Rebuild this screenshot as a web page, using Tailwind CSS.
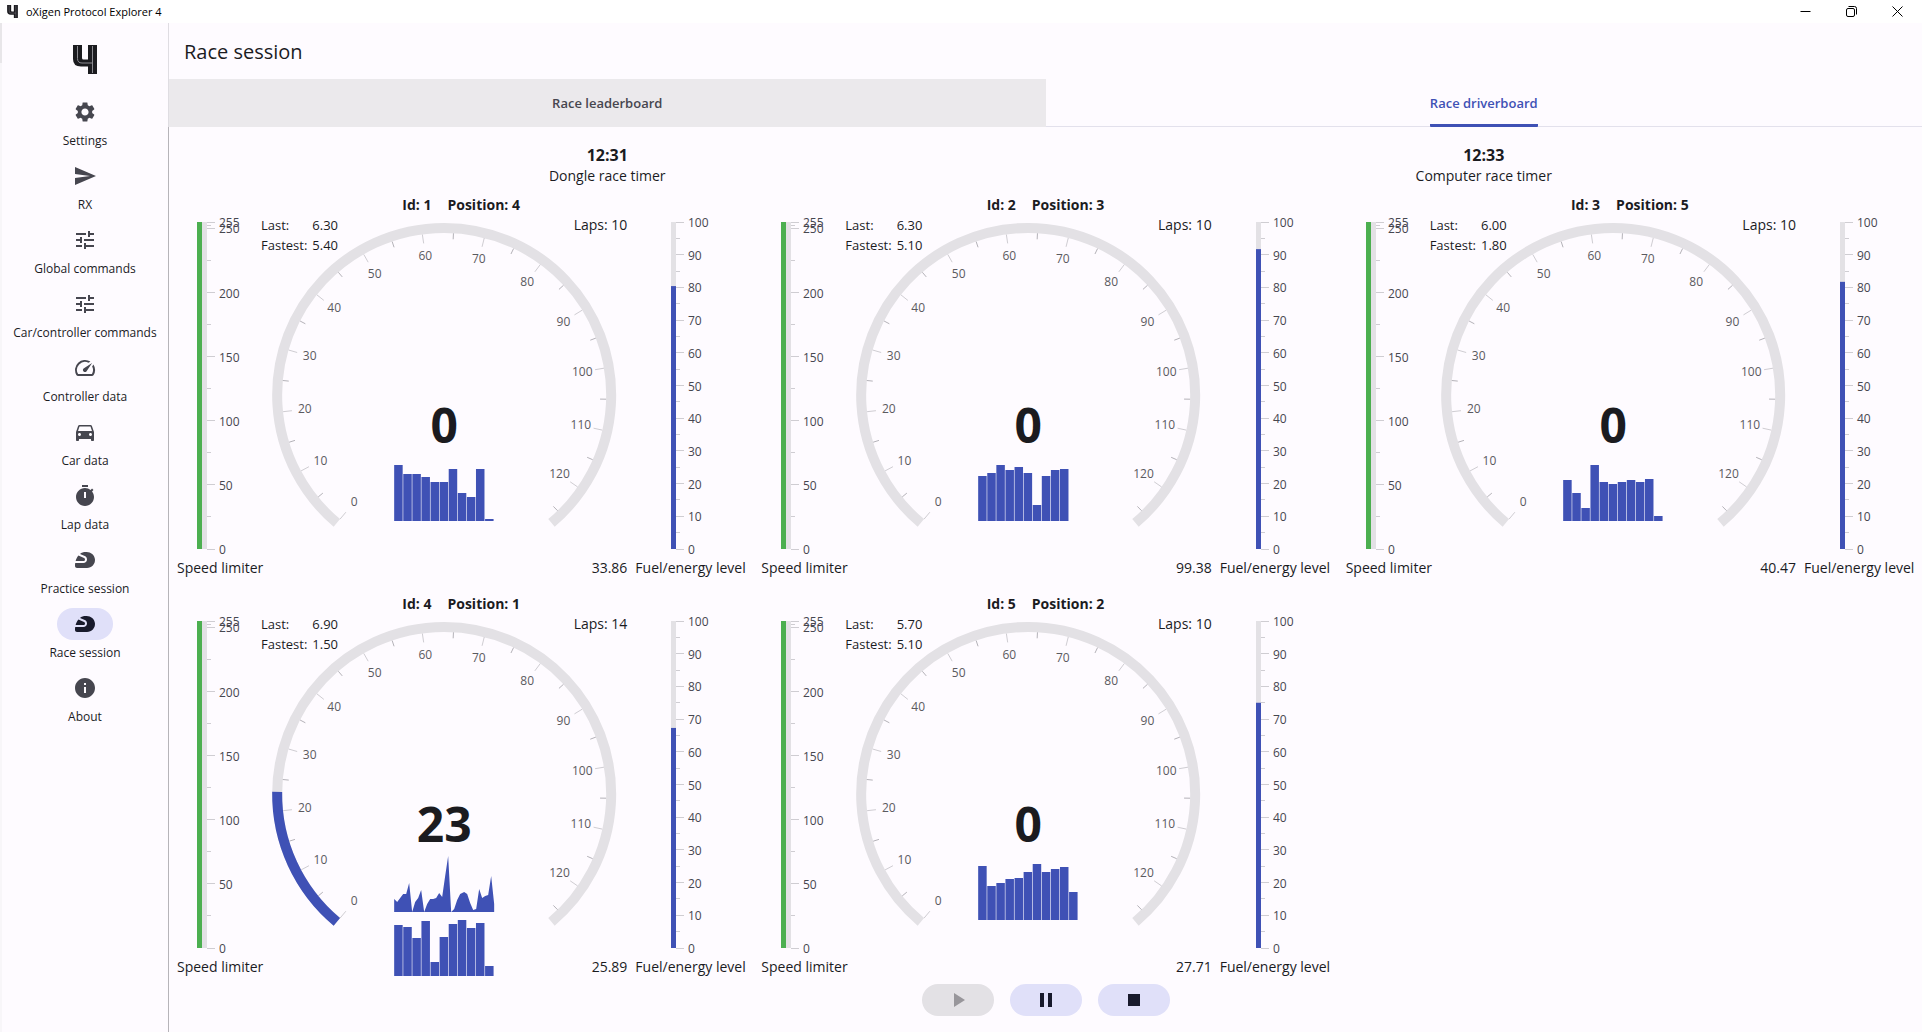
<!DOCTYPE html>
<html lang="en">
<head>
<meta charset="utf-8">
<meta name="viewport" content="width=device-width, initial-scale=1">
<title>oXigen Protocol Explorer 4</title>
<script src="https://cdn.jsdelivr.net/npm/@tailwindcss/browser@4"></script>
</head>
<body class="min-h-screen flex flex-col bg-[#fefbff] text-[#1b1b1f] font-['Open_Sans','Noto_Sans',sans-serif] text-[14px] leading-5">

<svg class="hidden" aria-hidden="true">
  <symbol id="logo" viewBox="0 0 24 29">
    <path fill="#1b1b1f" d="M0 0h9v13q0 1.500 1.500 1.500H15V0h9v29h-9v-7.500H8Q0 21.500 0 14z"/>
    <path fill="none" stroke="#8b8a90" stroke-width="1" d="M4.500 1v12.500q0 4.500 4.500 4.500h10.500M19.500 1v27"/>
  </symbol>
  <symbol id="settings" viewBox="0 0 24 24"><path d="M19.140 12.940c.04-.3.06-.61.06-.94 0-.32-.02-.64-.07-.94l2.030-1.580c.18-.14.23-.41.12-.61l-1.920-3.320c-.12-.22-.37-.29-.59-.22l-2.390.96c-.5-.38-1.030-.7-1.620-.94L14.400 2.810c-.04-.24-.24-.41-.48-.41h-3.840c-.24 0-.43.17-.47.41L9.250 5.350c-.59.24-1.130.57-1.620.94l-2.390-.96c-.22-.08-.47 0-.59.22L2.740 8.870c-.12.21-.08.47.12.61l2.030 1.580c-.05.3-.09.63-.09.94s.02.64.07.94l-2.030 1.580c-.18.14-.23.41-.12.61l1.920 3.320c.12.22.37.29.59.22l2.390-.96c.5.38 1.030.7 1.620.94l.36 2.540c.05.24.24.41.48.41h3.840c.24 0 .44-.17.47-.41l.36-2.540c.59-.24 1.130-.56 1.620-.94l2.390.96c.22.08.47 0 .59-.22l1.920-3.320c.12-.22.07-.47-.12-.61l-2.010-1.580zM12 15.600c-1.980 0-3.600-1.620-3.600-3.600s1.620-3.600 3.600-3.600 3.600 1.620 3.600 3.600-1.620 3.600-3.600 3.600z"/></symbol>
  <symbol id="send" viewBox="0 0 24 24"><path d="M2.010 21L23 12 2.010 3 2 10l15 2-15 2z"/></symbol>
  <symbol id="tune" viewBox="0 0 24 24"><path d="M3 17v2h6v-2H3zM3 5v2h10V5H3zm10 16v-2h8v-2h-8v-2h-2v6h2zM7 9v2H3v2h4v2h2V9H7zm14 4v-2H11v2h10zm-6-4h2V7h4V5h-4V3h-2v6z"/></symbol>
  <symbol id="speed" viewBox="0 0 24 24"><path d="M20.380 8.570l-1.230 1.850a8 8 0 0 1-.22 7.580H5.070A8 8 0 0 1 15.580 6.850l1.850-1.230A10 10 0 0 0 3.350 19a2 2 0 0 0 1.720 1h13.850a2 2 0 0 0 1.740-1 10 10 0 0 0-.27-10.440zM10.590 15.410a2 2 0 0 0 2.830 0l5.660-8.490-8.490 5.660a2 2 0 0 0 0 2.830z"/></symbol>
  <symbol id="car" viewBox="0 0 24 24"><path d="M18.920 6.010C18.720 5.420 18.160 5 17.500 5h-11c-.66 0-1.210.42-1.420 1.010L3 12v8c0 .55.45 1 1 1h1c.55 0 1-.45 1-1v-1h12v1c0 .55.45 1 1 1h1c.55 0 1-.45 1-1v-8l-2.080-5.990zM6.500 16c-.83 0-1.500-.67-1.500-1.500S5.670 13 6.500 13s1.500.67 1.500 1.500S7.330 16 6.500 16zm11 0c-.83 0-1.500-.67-1.500-1.500s.67-1.500 1.500-1.500 1.500.67 1.500 1.500-.67 1.500-1.500 1.500zM5 11l1.500-4.500h11L19 11H5z"/></symbol>
  <symbol id="timer" viewBox="0 0 24 24"><path d="M9 1h6v2H9zM19.030 7.390l1.420-1.420c-.43-.51-.9-.99-1.410-1.410l-1.420 1.420C16.070 4.740 14.120 4 12 4c-4.970 0-9 4.030-9 9s4.020 9 9 9 9-4.030 9-9c0-2.120-.74-4.070-1.970-5.610zM13 14h-2V8h2v6z"/></symbol>
  <symbol id="helmet" viewBox="0 0 24 24"><path d="M12 11.390c0-.65-.39-1.230-.98-1.480L5.440 7.550c-1.480 1.680-2.320 3.700-2.800 5.450h7.750c.89 0 1.610-.72 1.610-1.610zM21.960 11.220C21.550 7.050 17.820 4 13.630 4H12S9.330 4 7.020 5.880l4.770 2.030c1.330.57 2.200 1.870 2.200 3.320v.16c0 1.990-1.620 3.610-3.610 3.610H2.210C2 16.310 2 17.200 2 17.200v.8c0 1.100.9 2 2 2h10c4.670 0 8.410-4.010 7.960-8.780z"/></symbol>
  <symbol id="info" viewBox="0 0 24 24"><path d="M12 2C6.480 2 2 6.480 2 12s4.480 10 10 10 10-4.480 10-10S17.520 2 12 2zm1 15h-2v-6h2v6zm0-8h-2V7h2v2z"/></symbol>
</svg>

<header class="h-[23px] shrink-0 bg-white flex items-center pl-[7px] pr-0.5 text-black">
  <svg class="w-[11px] h-[13px]" aria-hidden="true"><use href="#logo"/></svg>
  <span class="ml-2 text-[11px] leading-4">oXigen Protocol Explorer 4</span>
  <div class="ml-auto flex h-full">
    <button class="w-[46px] flex items-center justify-center" aria-label="Minimize"><svg class="size-[11px]" viewBox="0 0 11 11" stroke="black" fill="none"><path d="M.5 5.500h10"/></svg></button>
    <button class="w-[46px] flex items-center justify-center" aria-label="Restore"><svg class="size-[11px]" viewBox="0 0 11 11" stroke="black" fill="none"><rect x=".5" y="2.500" width="8" height="8" rx="1.500"/><path d="M2.500 .5h6q2 0 2 2v6"/></svg></button>
    <button class="w-[46px] flex items-center justify-center" aria-label="Close"><svg class="size-[11px]" viewBox="0 0 11 11" stroke="black" fill="none"><path d="M.5 .5l10 10M10.500 .5l-10 10"/></svg></button>
  </div>
</header>

<div class="flex flex-1">
  <div class="w-0.5 shrink-0 bg-[#f8f6f9]"><div class="h-10 bg-[#e8e6e9]"></div></div>
  <aside class="w-[166px] shrink-0 flex flex-col items-center pt-[22px]">
    <svg class="w-6 h-[29px] mb-[22px]" role="img" aria-label="oXigen 4"><use href="#logo"/></svg>
    <nav id="nav" class="w-full flex flex-col gap-[11px]"></nav>
  </aside>

  <main class="flex-1 min-w-0 flex flex-col">
    <div class="border-l border-[#dfdde2]">
      <h1 class="h-14 pl-[15px] pt-0.5 flex items-center text-[20px] leading-7">Race session</h1>
      <div class="h-12 grid grid-cols-2 border-b border-[#e3e1ec] text-[13px] font-semibold" role="tablist">
        <button class="bg-[#ebe9ec] text-[#46464f] flex items-center justify-center" role="tab" aria-selected="false">Race leaderboard</button>
        <button class="text-[#3f51b5] flex justify-center" role="tab" aria-selected="true"><span class="h-12 flex items-center border-b-3 border-[#3f51b5] rounded-b-[1px] pt-[3px]">Race driverboard</span></button>
      </div>
    </div>

    <div class="flex-1 border-l border-[#b6b4b9] flex flex-col pb-4">
      <div class="grid grid-cols-2 text-center pt-[18px] pb-[7px]">
        <div><p class="text-[16px] font-bold leading-5">12:31</p><p class="leading-[22px]">Dongle race timer</p></div>
        <div><p class="text-[16px] font-bold leading-5">12:33</p><p class="leading-[22px]">Computer race timer</p></div>
      </div>
      <div id="board" class="grid grid-cols-3 gap-y-4"></div>
      <div class="mt-2 flex justify-center gap-4">
        <button class="w-[72px] h-8 rounded-full bg-[#e3e1e5] flex items-center justify-center" aria-label="Start" disabled><svg class="size-6" viewBox="0 0 24 24" fill="#98969b"><path d="M8 5v14l11-7z"/></svg></button>
        <button class="w-[72px] h-8 rounded-full bg-[#e0e0f9] flex items-center justify-center" aria-label="Pause"><svg class="size-6" viewBox="0 0 24 24" fill="#181a2c"><path d="M6 19h4V5H6v14zm8-14v14h4V5h-4z"/></svg></button>
        <button class="w-[72px] h-8 rounded-full bg-[#e0e0f9] flex items-center justify-center" aria-label="Stop"><svg class="size-6" viewBox="0 0 24 24" fill="#181a2c"><path d="M6 6h12v12H6z"/></svg></button>
      </div>
    </div>
  </main>
</div>

<script>
const navItems = [
  ['settings', 'Settings'], ['send', 'RX'], ['tune', 'Global commands'], ['tune', 'Car/controller commands'],
  ['speed', 'Controller data'], ['car', 'Car data'], ['timer', 'Lap data'], ['helmet', 'Practice session'],
  ['helmet', 'Race session'], ['info', 'About']
];
document.getElementById('nav').innerHTML = navItems.map(([icon, label]) => {
  const on = label === 'Race session';
  return `<a href="#" ${on ? 'aria-current="page"' : ''} class="flex flex-col items-center gap-[5px]">
    <span class="w-14 h-8 rounded-full flex items-center justify-center ${on ? 'bg-[#e0e0f9] fill-[#181a2c]' : 'fill-[#46464f]'}"><svg class="size-6" aria-hidden="true"><use href="#${icon}"/></svg></span>
    <span class="text-[12px] leading-4 font-medium whitespace-nowrap">${label}</span></a>`;
}).join('');

const cars = [
  {id: 1, pos: 4, last: '6.30', best: '5.40', laps: 10, speed: 0, fuel: 80.4, used: '33.86', bars: [56,47,47,44,39,39,52,28,24,52,2]},
  {id: 2, pos: 3, last: '6.30', best: '5.10', laps: 10, speed: 0, fuel: 91.7, used: '99.38', bars: [45,48,56,51,54,48,16,45,51,52]},
  {id: 3, pos: 5, last: '6.00', best: '1.80', laps: 10, speed: 0, fuel: 81.7, used: '40.47', bars: [41,28,13,56,39,37,39,41,39,42,5]},
  {id: 4, pos: 1, last: '6.90', best: '1.50', laps: 14, speed: 23, fuel: 67.3, used: '25.89', bars: [51,49,38,55,14,39,52,56,48,53,10],
   trace: [[0,13],[3,10],[6,14],[9,18],[12,18],[15,29],[18,0],[21,10],[24,14],[27,22],[30,0],[33,8],[36,13],[39,13],[42,14],[45,19],[48,15],[51,36],[54,56],[57,0],[60,3],[63,12],[66,18],[70,20],[73,18],[76,9],[79,2],[82,3],[85,23],[88,14],[91,16],[94,17],[97,36],[100,8]]},
  {id: 5, pos: 2, last: '5.70', best: '5.10', laps: 10, speed: 0, fuel: 75, used: '27.71', bars: [54,34,37,41,42,48,56,48,51,53,28]}
];

/* Vertical scale: y 8 is the maximum, y 335 is zero. */
const yOf = (v, max) => 335 - 327 * v / max;
function scale(x, max, major, minor) {
  const line = (v, len, c) => `<path d="M${x} ${Math.floor(yOf(v, max)) + .5}h${len}" stroke="${c}"/>`;
  return minor.map(v => line(v, 4, '#cfcdd2')).join('') + major.map(v => line(v, 8, '#cfcdd2') +
    `<text x="${x + 12}" y="${Math.round(yOf(v, max)) + 5}">${v}</text>`).join('');
}
const steps = (from, to, by) => Array.from({length: Math.floor((to - from) / by) + 1}, (_, i) => from + i * by);

const polar = (v, r) => {
  const a = (130 + v * 280 / 127) * Math.PI / 180;
  return [(182 + r * Math.cos(a)).toFixed(1), (181 + r * Math.sin(a)).toFixed(1)];
};
const arc = (v, color) => `<path d="M${polar(0, 167)}A167 167 0 ${v > 82 ? 1 : 0} 1 ${polar(v, 167)}" fill="none" stroke="${color}" stroke-width="10"/>`;

function dial(car) {
  const ticks = steps(0, 125, 5).map(v =>
    `<path d="M${polar(v, 162)}L${polar(v, v % 10 ? 156 : 153)}" stroke="${v % 10 ? '#b4b2b8' : '#cfcdd2'}"/>`).join('');
  const labels = steps(0, 120, 10).map(v => {
    const [x, y] = polar(v, 140);
    return `<text x="${x}" y="${+y + 4}" text-anchor="middle">${v}</text>`;
  }).join('');
  const base = car.trace ? 363 : 307;
  const bars = car.bars.map((h, i) =>
    `<rect x="${132 + i * 100 / 11}" y="${base - h}" width="8.500" height="${h}" fill="#3f51b5"/>`).join('');
  const trace = car.trace ? `<path fill="#3f51b5" d="M132 299L${car.trace.map(([x, h]) => `${132 + x} ${299 - h}`).join('L')}L232 299z"/>` : '';
  return `<svg viewBox="0 0 364 363" class="col-start-1 row-start-1 w-full h-[363px] overflow-visible text-[12px] fill-[#5b5a60]">
    ${arc(127, '#e3e1e5')}${car.speed ? arc(car.speed, '#3f51b5') : ''}${ticks}${labels}
    <text x="182" y="229" text-anchor="middle" class="text-[48px] font-bold fill-[#1b1b1f]">${car.speed}</text>
    ${trace}${bars}</svg>`;
}

document.getElementById('board').innerHTML = cars.map(car => `
  <section class="px-2">
    <h2 class="h-5 leading-[22px] flex justify-center gap-4 font-bold"><span>Id: ${car.id}</span><span>Position: ${car.pos}</span></h2>
    <div class="flex">
      <div class="w-[84px] shrink-0">
        <svg class="w-full h-[343px] overflow-visible text-[12px] fill-[#46464f]">
          <rect x="20" y="8" width="10" height="327" fill="#e3e1e5"/><rect x="20" y="8" width="5" height="327" fill="#4caf50"/>
          ${scale(30, 255, [0, 50, 100, 150, 200, 250, 255], [25, 75, 125, 175, 225, 252.5])}
        </svg>
        <p class="h-5 leading-[22px] whitespace-nowrap">Speed limiter</p>
      </div>
      <div class="flex-1 min-w-0 mr-2 grid">
        ${dial(car)}
        <dl class="col-start-1 row-start-1 self-start justify-self-start grid grid-cols-[auto_auto] gap-x-[5px] pt-px text-[13px]">
          <dt>Last:</dt><dd>${car.last}</dd><dt>Fastest:</dt><dd>${car.best}</dd>
        </dl>
        <p class="col-start-1 row-start-1 self-start justify-self-end pt-px">Laps: ${car.laps}</p>
        <p class="col-start-1 row-start-1 self-end justify-self-end h-5 leading-[22px]">${car.used}</p>
      </div>
      <div class="w-[110px] shrink-0">
        <svg class="w-full h-[343px] overflow-visible text-[12px] fill-[#46464f]">
          <rect x="36" y="8" width="5" height="327" fill="#e3e1e5"/><rect x="36" y="${yOf(car.fuel, 100)}" width="5" height="${3.27 * car.fuel}" fill="#3f51b5"/>
          ${scale(41, 100, steps(0, 100, 10), steps(5, 95, 10))}
        </svg>
        <p class="h-5 leading-[22px] whitespace-nowrap">Fuel/energy level</p>
      </div>
    </div>
  </section>`).join('');
</script>
</body>
</html>
